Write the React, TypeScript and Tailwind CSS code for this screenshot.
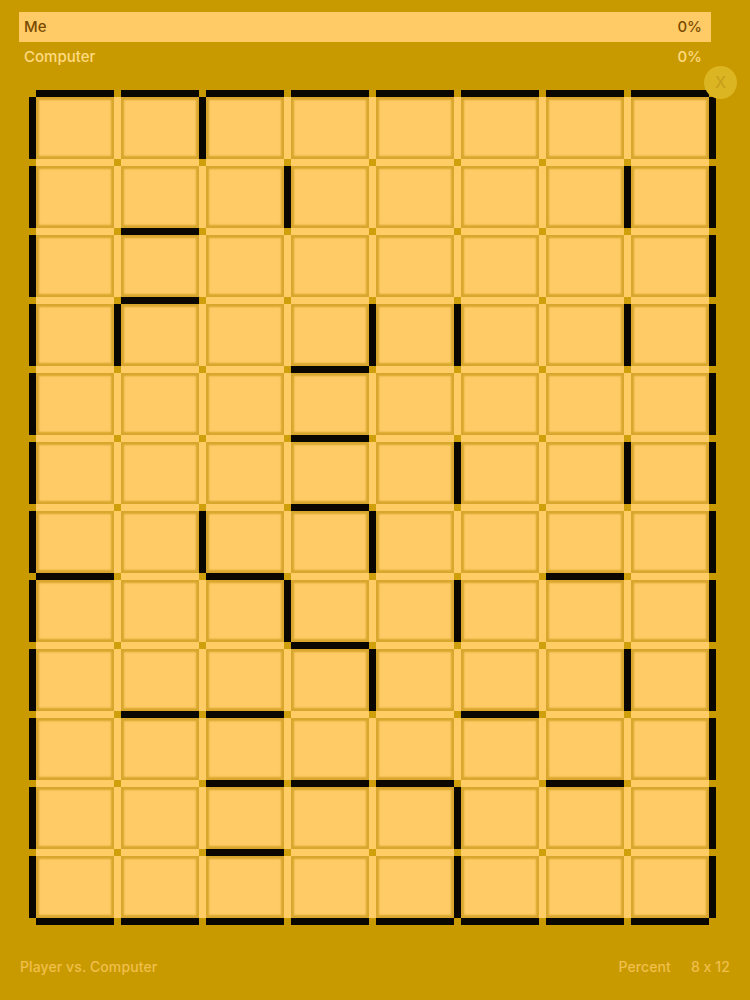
import React from "react";

const COLS = 8;
const ROWS = 12;

// Interior vertical walls: row -> line indexes (1..7)
const vWalls: Record<number, number[]> = {
  0: [2],
  1: [3, 7],
  3: [1, 4, 5, 7],
  5: [5, 7],
  6: [2, 4],
  7: [3, 5],
  8: [4, 7],
  10: [5],
  11: [5],
};

// Interior horizontal walls: line (1..11) -> column indexes
const hWalls: Record<number, number[]> = {
  2: [1],
  3: [1],
  4: [3],
  5: [3],
  6: [3],
  7: [0, 2, 6],
  8: [3],
  9: [1, 2, 5],
  10: [2, 3, 4, 6],
  11: [2],
};

function Board() {
  const items: React.ReactNode[] = [];
  for (let r = 0; r <= ROWS; r++) {
    for (let c = 0; c <= COLS; c++) {
      const outerDot = r === 0 || r === ROWS || c === 0 || c === COLS;
      items.push(
        <div key={`d${r}-${c}`} className={outerDot ? "bg-transparent" : "bg-[#cf9f0c]"} />
      );
      if (c < COLS) {
        const wall = r === 0 || r === ROWS || (hWalls[r] || []).includes(c);
        items.push(
          <div key={`h${r}-${c}`} className={wall ? "bg-[#0a0600]" : "bg-[#ffcc66]"} />
        );
      }
    }
    if (r === ROWS) break;
    for (let c = 0; c <= COLS; c++) {
      const wall = c === 0 || c === COLS || (vWalls[r] || []).includes(c);
      items.push(
        <div key={`v${r}-${c}`} className={wall ? "bg-[#0a0600]" : "bg-[#ffcc66]"} />
      );
      if (c < COLS) {
        items.push(
          <div
            key={`c${r}-${c}`}
            className="bg-[#ffcb66] shadow-[inset_0_0_2px_3px_#d8a62c]"
          />
        );
      }
    }
  }
  return (
    <div className="mt-[18px] ml-[29px] grid w-max grid-cols-[repeat(8,7px_78px)_7px] grid-rows-[repeat(12,7px_62px)_7px]">
      {items}
    </div>
  );
}

export default function App() {
  return (
    <div className="relative flex h-[1000px] w-[750px] flex-col overflow-hidden bg-[#c99a00] pt-3 font-['Inter','Liberation_Sans',sans-serif]">
      <div className="mr-[39px] ml-[19px] flex h-[30px] items-center justify-between bg-[#ffcb66] pr-[9px] pl-[5px] text-[15px] font-medium text-[#7a4a00]">
        <span>Me</span>
        <span>0%</span>
      </div>
      <div className="mr-[39px] ml-[19px] flex h-[30px] items-center justify-between pr-[9px] pl-[5px] text-[15px] font-medium text-[#ffdb80]">
        <span>Computer</span>
        <span>0%</span>
      </div>
      <Board />
      <div className="mx-[20px] mt-[31px] flex items-center justify-between text-[14px] font-medium tracking-[0.1px] text-[#f0bf4c]">
        <span>Player vs. Computer</span>
        <div className="flex gap-[20px]">
          <span>Percent</span>
          <span>8 x 12</span>
        </div>
      </div>
      <div className="absolute top-[65.5px] left-[704px] flex h-[33px] w-[33px] items-center justify-center rounded-full bg-[#dcb522] text-[16px] font-medium text-[#c9a01c]">
        X
      </div>
    </div>
  );
}
